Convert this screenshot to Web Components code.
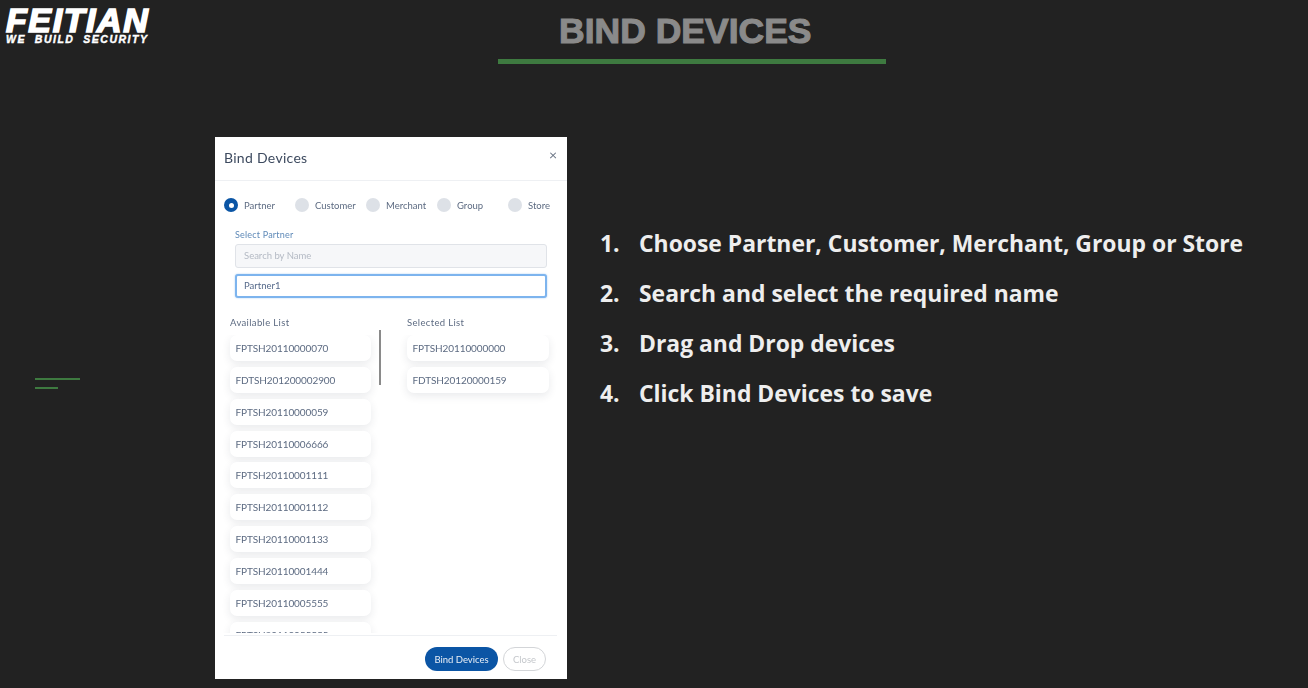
<!DOCTYPE html>
<html>
<head>
<meta charset="utf-8">
<title>Bind Devices</title>
<style>
  html, body { margin: 0; height: 688px; overflow: hidden; background: #222222; }
</style>
</head>
<body>
<slide-page>
  <slide-header slot="header" heading="BIND DEVICES"></slide-header>
  <slide-deco slot="deco"></slide-deco>
  <bind-modal slot="modal"></bind-modal>
  <step-list slot="steps">
    <step-item n="1">Choose Partner, Customer, Merchant, Group or Store</step-item>
    <step-item n="2">Search and select the required name</step-item>
    <step-item n="3">Drag and Drop devices</step-item>
    <step-item n="4">Click Bind Devices to save</step-item>
  </step-list>
</slide-page>

<script>
class SlidePage extends HTMLElement {
  constructor() {
    super();
    this.attachShadow({ mode: 'open' });
    this.shadowRoot.innerHTML = `
      <style>
        :host { display: block; width: 1308px; height: 688px; background: #222222; overflow: hidden; }
        .main { display: flex; align-items: flex-start; }
      </style>
      <slot name="header"></slot>
      <div class="main">
        <slot name="deco"></slot>
        <slot name="modal"></slot>
        <slot name="steps"></slot>
      </div>
    `;
  }
}

class SlideHeader extends HTMLElement {
  constructor() {
    super();
    this.attachShadow({ mode: 'open' });
  }

  connectedCallback() {
    const heading = this.getAttribute('heading') || '';
    this.shadowRoot.innerHTML = `
      <style>
        :host { display: flex; height: 137px; align-items: flex-start; }
        .logo { width: 498px; padding: 8px 0 0 6px; box-sizing: border-box; color: #fff; font-family: "Liberation Sans", sans-serif; }
        .name { font-size: 34px; line-height: 25px; height: 26px; font-weight: 700; font-style: italic; letter-spacing: 1.6px; -webkit-text-stroke: 1.7px #fff; }
        .tag { font-size: 10.5px; line-height: 9px; margin-top: 1px; font-weight: 700; font-style: italic; letter-spacing: 1.5px; word-spacing: 4.5px; -webkit-text-stroke: .4px #fff; white-space: nowrap; }
        .title { width: 388px; }
        h1 { margin: 0; height: 59px; box-sizing: border-box; padding: 10px 0 0 61px; font: 700 35.5px/42px "Liberation Sans", sans-serif; color: #8a8a8a; -webkit-text-stroke: 1.1px #8a8a8a; white-space: nowrap; }
        .rule { height: 5px; background: #3e7a40; }
      </style>
      <div class="logo">
        <div class="name">FEITIAN</div>
        <div class="tag">WE BUILD SECURITY</div>
      </div>
      <div class="title">
        <h1>${heading}</h1>
        <div class="rule"></div>
      </div>
    `;
  }
}

class SlideDeco extends HTMLElement {
  constructor() {
    super();
    this.attachShadow({ mode: 'open' });
    this.shadowRoot.innerHTML = `
      <style>
        :host { display: block; flex: 0 0 215px; box-sizing: border-box; padding: 241px 0 0 35px; }
        div { height: 2px; background: #3e7a40; }
        .a { width: 45px; margin-bottom: 7px; }
        .b { width: 23px; }
      </style>
      <div class="a"></div>
      <div class="b"></div>
    `;
  }
}

class RadioOption extends HTMLElement {
  constructor() {
    super();
    this.attachShadow({ mode: 'open' });
  }

  connectedCallback() {
    const on = this.hasAttribute('checked');
    this.shadowRoot.innerHTML = `
      <style>
        :host { display: flex; align-items: center; gap: 6px; font-size: 9.5px; color: #5d6b82; white-space: nowrap; }
        .dot { flex: 0 0 14px; height: 14px; border-radius: 50%; background: ${on ? '#0b55a5' : '#dde1e7'}; display: flex; align-items: center; justify-content: center; }
        .dot i { width: 5px; height: 5px; border-radius: 50%; background: #fff; display: ${on ? 'block' : 'none'}; }
      </style>
      <span class="dot"><i></i></span>
      <slot></slot>
    `;
  }
}

class DeviceCard extends HTMLElement {
  constructor() {
    super();
    this.attachShadow({ mode: 'open' });
    this.shadowRoot.innerHTML = `
      <style>
        :host { display: flex; align-items: center; flex: 0 0 26px; box-sizing: border-box; padding: 0 5.5px; background: #fff; border-radius: 7px; box-shadow: 0 3px 9px rgba(40, 50, 70, .10); font-size: 10px; letter-spacing: -.1px; color: #5d6b82; white-space: nowrap; }
      </style>
      <slot></slot>
    `;
  }
}

class BindModal extends HTMLElement {
  constructor() {
    super();
    this.attachShadow({ mode: 'open' });
    const available = ['FPTSH20110000070', 'FDTSH201200002900', 'FPTSH20110000059', 'FPTSH20110006666', 'FPTSH20110001111',
      'FPTSH20110001112', 'FPTSH20110001133', 'FPTSH20110001444', 'FPTSH20110005555', 'FPTSH20110055555'];
    const selected = ['FPTSH20110000000', 'FDTSH20120000159'];
    const cards = list => list.map(s => `<device-card>${s}</device-card>`).join('');
    this.shadowRoot.innerHTML = `
      <style>
        :host { display: flex; flex-direction: column; flex: 0 0 352px; min-width: 0; height: 542px; background: #fff; font-family: Lato, sans-serif; color: #5d6b82; filter: blur(.3px); }
        .head { display: flex; justify-content: space-between; height: 44px; box-sizing: border-box; padding: 12px 9px; border-bottom: 1px solid #eef0f3; }
        .head h2 { margin: 0; font-size: 14px; line-height: 18px; font-weight: 400; letter-spacing: .3px; color: #3d4a5f; }
        .x { font-size: 14px; line-height: 14px; color: #6b7585; margin-top: -1px; margin-right: 1px; }
        .radios { display: grid; grid-template-columns: 71px 71px 71px 71px 1fr; height: 16px; margin: 16px 0 0 9px; }
        .pick { margin: 16px 20px 0 20px; }
        label { display: block; font-size: 9px; line-height: 12px; letter-spacing: .2px; color: #5f8ab8; }
        .field { box-sizing: border-box; height: 24px; margin-top: 3px; padding: 0 8px; border: 1px solid #e0e3e8; border-radius: 3px; background: #f6f7f9; font-size: 9.5px; line-height: 22px; color: #b4bac4; }
        .field.on { margin-top: 6px; background: #fff; border: 2px solid #7db4ee; box-shadow: 0 0 2px #a9cdf3; color: #55698a; line-height: 20px; padding: 0 7px; }
        .lists { display: flex; margin-top: 19px; }
        .col.left { flex: 0 0 141px; margin-left: 15px; }
        .col.right { flex: 0 0 142px; margin-left: 26px; }
        .col h3 { margin: 0; font-size: 9.5px; line-height: 12px; font-weight: 400; letter-spacing: .35px; color: #5d6b82; }
        .items { display: flex; flex-direction: column; gap: 5.85px; height: 298px; margin-top: 6px; margin-left: -15px; margin-right: -8px; padding: 0 8px 0 15px; overflow: hidden; }
        .track { flex: 0 0 2px; margin: 13px 0 0 8px; }
        .thumb { width: 2px; height: 55px; background: #8a8a8a; }
        .foot { display: flex; justify-content: flex-end; gap: 5px; margin: 2px 10px 0 9px; padding: 11px 11px 0 0; border-top: 1px solid #eef0f3; }
        button { height: 24px; border-radius: 12px; padding: 0; font: 400 9.5px Lato, sans-serif; box-sizing: border-box; }
        .bind { width: 73px; background: #0b55a5; border: 0; color: #e8eef6; }
        .close { width: 43px; background: #fff; border: 1px solid #d3d5d8; color: #c4c7cb; }
      </style>
      <div class="head">
        <h2>Bind Devices</h2>
        <span class="x">×</span>
      </div>
      <div class="radios">
        <radio-option checked>Partner</radio-option>
        <radio-option>Customer</radio-option>
        <radio-option>Merchant</radio-option>
        <radio-option>Group</radio-option>
        <radio-option>Store</radio-option>
      </div>
      <div class="pick">
        <label>Select Partner</label>
        <div class="field">Search by Name</div>
        <div class="field on">Partner1</div>
      </div>
      <div class="lists">
        <div class="col left">
          <h3>Available List</h3>
          <div class="items">${cards(available)}</div>
        </div>
        <div class="track"><div class="thumb"></div></div>
        <div class="col right">
          <h3>Selected List</h3>
          <div class="items">${cards(selected)}</div>
        </div>
      </div>
      <div class="foot">
        <button class="bind">Bind Devices</button>
        <button class="close">Close</button>
      </div>
    `;
  }
}

class StepItem extends HTMLElement {
  constructor() {
    super();
    this.attachShadow({ mode: 'open' });
  }

  connectedCallback() {
    this.shadowRoot.innerHTML = `
      <style>
        :host { display: grid; grid-template-columns: 39px auto; height: 50px; }
      </style>
      <span>${this.getAttribute('n')}.</span>
      <span><slot></slot></span>
    `;
  }
}

class StepList extends HTMLElement {
  constructor() {
    super();
    this.attachShadow({ mode: 'open' });
    this.shadowRoot.innerHTML = `
      <style>
        :host { display: block; box-sizing: border-box; padding: 82px 0 0 33px; font: 700 22.9px/50px "Open Sans", sans-serif; color: #eeeeee; white-space: nowrap; }
      </style>
      <slot></slot>
    `;
  }
}

customElements.define('slide-page', SlidePage);
customElements.define('slide-header', SlideHeader);
customElements.define('slide-deco', SlideDeco);
customElements.define('radio-option', RadioOption);
customElements.define('device-card', DeviceCard);
customElements.define('bind-modal', BindModal);
customElements.define('step-item', StepItem);
customElements.define('step-list', StepList);
</script>
</body>
</html>
